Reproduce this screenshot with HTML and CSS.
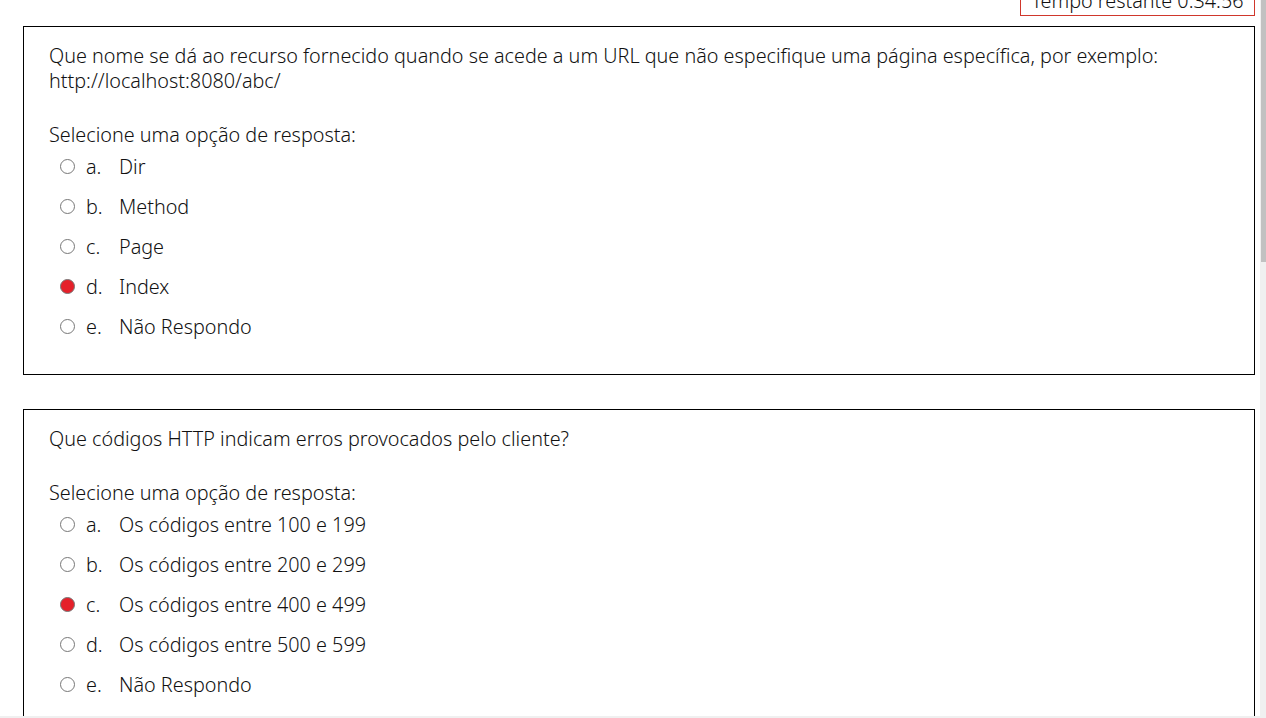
FILE: index.html
```html
<!DOCTYPE html>
<html lang="pt">
<head>
<meta charset="utf-8">
<title>Questionário</title>
<link rel="stylesheet" href="styles.css">
</head>
<body>
<div class="page">
  <div class="timer-row">
    <div class="timer">Tempo restante 0:34:56</div>
  </div>

  <div class="question">
    <p class="qtext">Que nome se dá ao recurso fornecido quando se acede a um URL que não especifique uma página específica, por exemplo:<br>http://localhost:8080/abc/</p>
    <p class="prompt">Selecione uma opção de resposta:</p>
    <div class="answers">
      <label class="opt"><input type="radio" name="q1"><span class="letter">a.</span><span>Dir</span></label>
      <label class="opt"><input type="radio" name="q1"><span class="letter">b.</span><span>Method</span></label>
      <label class="opt"><input type="radio" name="q1"><span class="letter">c.</span><span>Page</span></label>
      <label class="opt"><input type="radio" name="q1" checked><span class="letter">d.</span><span>Index</span></label>
      <label class="opt"><input type="radio" name="q1"><span class="letter">e.</span><span>Não Respondo</span></label>
    </div>
  </div>

  <div class="question">
    <p class="qtext">Que códigos HTTP indicam erros provocados pelo cliente?</p>
    <p class="prompt">Selecione uma opção de resposta:</p>
    <div class="answers">
      <label class="opt"><input type="radio" name="q2"><span class="letter">a.</span><span>Os códigos entre 100 e 199</span></label>
      <label class="opt"><input type="radio" name="q2"><span class="letter">b.</span><span>Os códigos entre 200 e 299</span></label>
      <label class="opt"><input type="radio" name="q2" checked><span class="letter">c.</span><span>Os códigos entre 400 e 499</span></label>
      <label class="opt"><input type="radio" name="q2"><span class="letter">d.</span><span>Os códigos entre 500 e 599</span></label>
      <label class="opt"><input type="radio" name="q2"><span class="letter">e.</span><span>Não Respondo</span></label>
    </div>
  </div>
</div>
<div class="scrollbar"><div class="thumb"></div></div>
<div class="hscroll"></div>
</body>
</html>
```
FILE: styles.css
```css
html, body {
  margin: 0;
  padding: 0;
  background: #fff;
  overflow: hidden;
  height: 718px;
}
body {
  font-family: "Noto Sans", "Open Sans", sans-serif;
  font-size: 19.8px;
  font-weight: 300;
  line-height: 25px;
  color: #111;
}
.page {
  padding: 0 11px 0 23px;
}
.timer-row {
  display: flex;
  justify-content: flex-end;
  margin-top: -25px;
  margin-bottom: 10px;
}
.timer {
  box-sizing: border-box;
  width: 235px;
  border: 1px solid #d0372c;
  padding: 12px 0 2px 0;
  text-align: center;
  white-space: nowrap;
  line-height: 25px;
}
.question {
  border: 1px solid #000;
  padding: 16px 25px 35px 25px;
  margin-bottom: 34px;
}
.qtext {
  margin: 0;
}
.prompt {
  margin: 29px 0 0 0;
}
.answers {
  display: flex;
  flex-direction: column;
  padding-left: 10px;
  margin-top: 7px;
  gap: 15px;
}
.opt {
  display: flex;
  align-items: center;
}
.opt input {
  appearance: none;
  -webkit-appearance: none;
  width: 15px;
  height: 15px;
  margin: 0 11px 0 1px;
  border: 1px solid #777;
  border-radius: 50%;
  background: #fff;
  box-sizing: border-box;
}
.opt input:checked {
  background: #e5202a;
  border-color: #777;
}
.letter {
  width: 33px;
}
.scrollbar {
  position: fixed;
  top: 0;
  right: 0;
  width: 6px;
  height: 716px;
  background: #f0f0f0;
}
.thumb {
  margin: 0 0 0 1px;
  width: 5px;
  height: 262px;
  background: #c1c1c1;
}
.hscroll {
  position: fixed;
  left: 0;
  bottom: 0;
  width: 100%;
  height: 2px;
  background: #f0f0f0;
}
```
